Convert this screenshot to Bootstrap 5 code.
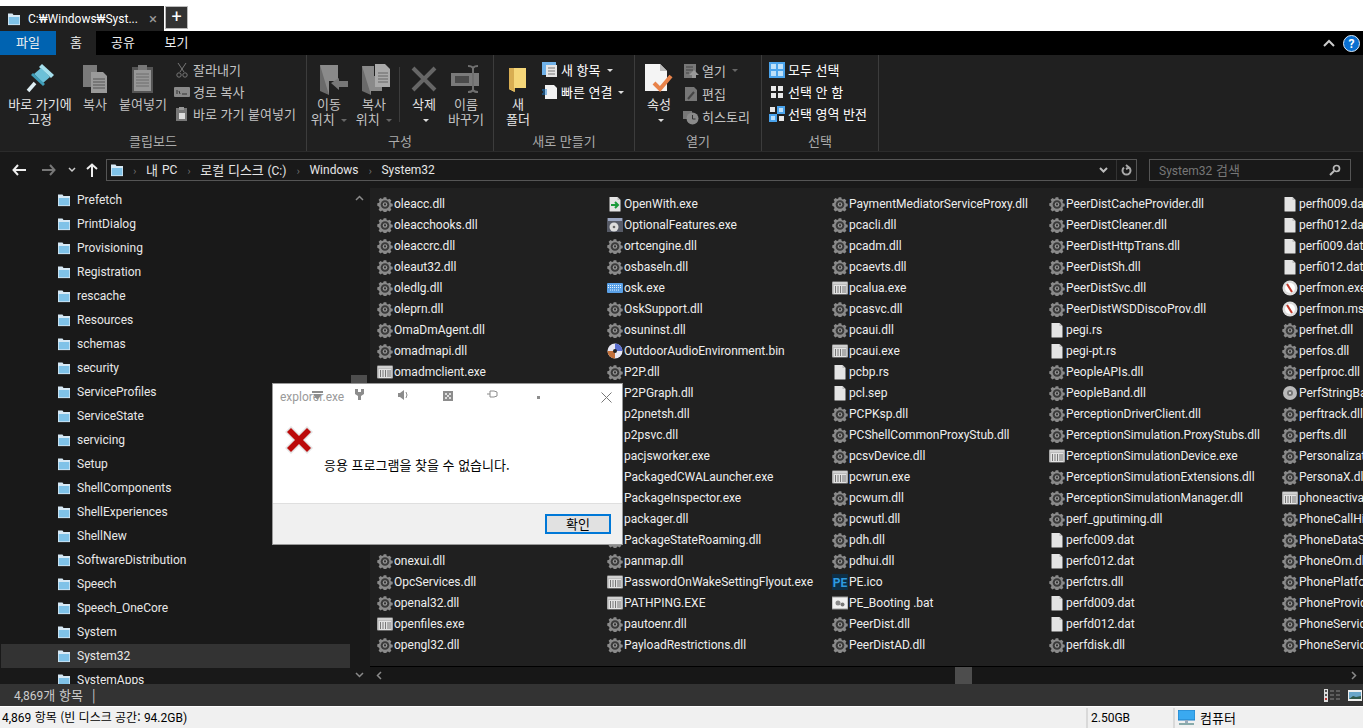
<!DOCTYPE html>
<html lang="ko">
<head>
    <meta charset="UTF-8">
    <meta name="viewport" content="width=device-width, initial-scale=1.0">
    <link href="https://cdn.jsdelivr.net/npm/bootstrap@5.3.3/dist/css/bootstrap.min.css" rel="stylesheet">
    <title>C:\Windows\System32</title>
    <style>
        html, body { height: 100%; }
        body { width: 1363px; height: 728px; overflow: hidden; background: #fff; color: #fff; font: 12px/16px Roboto, "Noto Sans CJK KR", sans-serif; position: relative; }
        .ko { font-family: "Noto Sans CJK KR", Roboto, sans-serif; font-size: 13px; }
        .lat { font-family: Roboto, sans-serif; font-size: 12px; }

        /* title bar */
        .title-strip { height: 31px; padding-top: 6px; background: #fff; }
        .win-tab { width: 164px; height: 25px; background: #202020; padding: 0 7px; gap: 7px; white-space: nowrap; }
        .win-tab .tab-x { color: #999; font-size: 15px; margin-left: auto; }
        .win-plus { width: 23px; height: 23px; margin-left: 1px; background: #333; border: 1px solid #bbb; font-size: 18px; line-height: 19px; text-align: center; }

        /* ribbon */
        .rb-tabs { height: 24px; background: #000; }
        .rb-tab { height: 24px; line-height: 22px; text-align: center; color: #eee; }
        .rb-tab.file-tab { width: 56px; background: #0063b1; }
        .rb-tab.on { width: 40px; background: #202020; height: 25px; position: relative; z-index: 1; }
        .rb-tab.t2 { width: 54px; } .rb-tab.t3 { width: 53px; }
        .rb-right { margin-left: auto; padding-right: 3px; gap: 8px; }
        .rb-body { height: 97px; background: #202020; border-bottom: 1px solid #2b2b2b; }
        .rb-group { border-right: 1px solid #3c3c3c; position: relative; height: 96px; padding-top: 3px; flex: none; }
        .rb-label { position: absolute; left: 0; right: 0; bottom: 0; height: 20px; line-height: 20px; text-align: center; color: #ababab; }
        .rb-big { flex: none; text-align: center; line-height: 15px; color: #e6e6e6; padding-top: 5px; }
        .rb-big svg { display: block; margin: 0 auto 1px; height: 32px; }
        .rb-dim { color: #c4c4c4; }
        .rb-small { line-height: 22px; white-space: nowrap; padding-top: 1px; }
        .rb-small > div { height: 22px; display: flex; align-items: center; gap: 3px; }
        .rb-small.tall > div { height: 23px; }
        .caret-s { display: inline-block; border: 3px solid transparent; border-top: 3px solid #ddd; border-bottom: 0; vertical-align: middle; margin-left: 3px; }
        .caret-d { border-top-color: #666; }
        .vsep { width: 1px; background: #3c3c3c; height: 55px; margin-top: 9px; }

        /* address bar */
        .addr-row { height: 36px; background: #191919; padding-top: 7px; }
        .nav-ic { width: 26px; height: 22px; display: flex; align-items: center; justify-content: center; }
        .addr-box { width: 1031px; height: 22px; border: 1px solid #555; gap: 9px; padding-left: 3px; color: #e6e6e6; }
        .addr-box .sep { color: #777; font-size: 11px; width: 4px; }
        .addr-box .sep:not(:first-of-type) { margin-left: 1px; }
        .search-box { width: 202px; height: 22px; margin-left: 12px; border: 1px solid #555; color: #777; padding: 0 9px; }

        /* main area */
        .main-area { height: 496px; overflow: hidden; background: #191919; }
        .side-tree { width: 368px; flex: none; background: #191919; position: relative; overflow: hidden; }
        .tree-row { height: 24px; margin: 0 18px 0 1px; padding-left: 56px; gap: 6px; color: #e8e8e8; }
        .tree-row.on { background: #333; }
        .tree-sb { position: absolute; top: 0; bottom: 0; right: 1px; width: 16px; }
        .tree-thumb { position: absolute; top: 187px; left: 0; right: 0; height: 160px; background: #4d4d4d; }
        .sb-arrow { position: absolute; left: 0; right: 0; text-align: center; line-height: 6px; }
        .files-wrap { width: 993px; flex: none; margin-left: 2px; background: #202020; position: relative; overflow: hidden; }
        .files-grid { height: 479px; padding: 5px 0 0 7px; display: grid; grid-auto-flow: column; grid-template-rows: repeat(22, 21px); grid-template-columns: 230px 225px 217px 233px 200px; overflow: hidden; border-bottom: 1px solid #000; }
        .file-item { display: flex; align-items: center; gap: 1px; white-space: nowrap; color: #eee; }
        .file-item svg { flex: none; }
        .hscroll { height: 17px; background: #171717; position: relative; }
        .hscroll-thumb { position: absolute; left: 585px; top: 0; width: 17px; height: 17px; background: #4d4d4d; }

        /* status bars */
        .status-dark { height: 22px; background: #333; color: #ccc; padding-left: 14px; gap: 9px; }
        .status-icons { margin-left: auto; gap: 7px; padding-right: 1px; }
        .status-white { height: 22px; background: #f0f0f0; color: #000; border-top: 1px solid #fff; }
        .status-count { font-size: 12px; padding-left: 2px; }
        .st-cell { border-left: 2px solid #d9d9d9; padding-left: 3px; height: 20px; gap: 5px; flex: none; }

        /* message box */
        .err-box { position: absolute; left: 272px; top: 383px; width: 351px; height: 162px; background: #fff; border: 1px solid #999; color: #000; z-index: 5; }
        .err-title { height: 28px; padding-left: 7px; padding-top: 5px; color: #9a9a9a; font-size: 12px; position: relative; }
        .err-ghost { position: absolute; top: 1px; left: 0; right: 0; height: 20px; color: #8c8c8c; }
        .err-ghost svg { position: absolute; }
        .err-body { height: 91px; position: relative; }
        .err-msg { position: absolute; left: 51px; top: 45px; }
        .err-ic { position: absolute; left: 11px; top: 13px; }
        .err-foot { height: 41px; background: #f0f0f0; border-top: 1px solid #dfdfdf; padding: 10px 11px 0 0; text-align: right; }
        .err-ok { width: 66px; height: 20px; padding: 0; border-radius: 0; border: 2px solid #0078d7; background: #e1e1e1; line-height: 14px; color: #000; }
    </style>
</head>
<body>
    <svg width="0" height="0" class="position-absolute">
        <defs>
            <symbol id="i-gear" viewBox="-0.500 -0.500 17 17">
                <path fill="#8a8a8a" d="M6.600.800h2.800l.4 1.900 1.300.6 1.700-1 2 2-1 1.600.5 1.400 1.900.4v2.800l-1.900.4-.5 1.400 1 1.700-2 1.900-1.700-1-1.300.6-.4 1.900H6.600l-.4-1.900-1.300-.6-1.700 1-2-1.900 1-1.700-.5-1.400L-.2 9.900V7.100l1.900-.4.500-1.400-1-1.700 2-1.900 1.700 1 1.300-.6z"/>
                <circle cx="8" cy="8.500" r="4.600" fill="#3a3a3a"/><circle cx="8" cy="8.500" r="2.400" fill="#9a9a9a"/><circle cx="8" cy="8.500" r="1.200" fill="#333"/>
            </symbol>
            <symbol id="i-page" viewBox="0 0 16 16">
                <path fill="#e4e4e4" d="M2.500 1h8l3 3v11q0 .5-.5.5H3q-.5 0-.5-.5z"/><path fill="#bbb" d="M10.500 1v3h3z"/>
            </symbol>
            <symbol id="i-exe" viewBox="0 0 16 16">
                <rect x="0" y="1.500" width="16" height="13" rx="1" fill="#a8a8a8"/><rect x="1" y="2" width="14" height="2.500" fill="#d0d0d0"/>
                <rect x="1.500" y="5" width="13" height="9" fill="#e2e2e2"/>
                <path stroke="#777" d="M3.500 6v7M6 6v7M8.500 6v7M11 6v7M13 6v7"/>
            </symbol>
            <symbol id="i-folder" viewBox="0 0 14 14">
                <path fill="#d7e9f5" d="M1 1.500h4.500l1 1.500H13v10H1z"/><path fill="#7fc2e8" d="M1.800 5h10.500v7.300H1.800z"/><path fill="#444" d="M1 13h12v.6H1z"/>
            </symbol>
            <symbol id="i-folder-y" viewBox="0 0 20 28">
                <path fill="#c89a3f" d="M1 3l6 1v23l-6-3z"/><path fill="#f5d679" d="M1 3h17v20H6.500v4L1 24z"/><path fill="#d8ad52" d="M1 3h5v23l-5-2z"/>
            </symbol>
            <symbol id="i-docs" viewBox="0 0 26 30">
                <path fill="#7a7a7a" d="M1 1h14v22H1z"/><path fill="#9a9a9a" d="M9 8h12l4 4v17H9z"/><path stroke="#555" d="M11 15h12M11 18h12M11 21h12M11 24h12"/>
            </symbol>
            <symbol id="i-clip" viewBox="0 0 24 30">
                <rect x="1" y="3" width="21" height="26" fill="#555"/><rect x="3" y="6" width="17" height="21" fill="#979797"/><rect x="7" y="1" width="9" height="5" fill="#777"/><path stroke="#6c6c6c" d="M5 10h13M5 13h13M5 16h13M5 19h13M5 22h13"/>
            </symbol>
            <symbol id="i-move" viewBox="0 0 30 32">
                <path fill="#6a6a6a" d="M1 2l9 4v26l-9-4z"/><path fill="#8a8a8a" d="M1 2h18v16H10v14z"/><path fill="#777" d="M12 20l8-5v3h9v6h-9v3z"/>
            </symbol>
            <symbol id="i-copyto" viewBox="0 0 30 32">
                <path fill="#6a6a6a" d="M1 3l9 4v25l-9-4z"/><path fill="#8a8a8a" d="M1 3h12v10h8v15H10v4z"/><path fill="#aaa" d="M14 1h10l5 5v18H14z"/><path stroke="#666" d="M17 10h10M17 13h10M17 16h10M17 19h10"/>
            </symbol>
            <symbol id="i-rename" viewBox="0 0 30 30">
                <rect x="0" y="9" width="28" height="13" fill="#7a7a7a"/><rect x="4" y="12" width="14" height="7" fill="#4a4a4a"/>
                <path fill="none" stroke="#6f6f6f" stroke-width="2" d="M17 2q4 0 5 2 1-2 5-2M22 4v22M17 28q4 0 5-2 1 2 5 2"/>
            </symbol>
            <symbol id="i-props" viewBox="0 0 30 32">
                <path fill="#f4f4f4" d="M1 1h15l7 7v20H1z"/><path fill="#bbb" d="M16 1v7h7z"/>
                <path fill="none" stroke="#e8834a" stroke-width="4" d="M10 20l6 6 11-13"/>
            </symbol>
        </defs>
    </svg>

    <div class="title-strip d-flex align-items-start">
        <div class="win-tab d-flex align-items-center">
            <svg width="14" height="14"><use href="#i-folder"/></svg>
            <span>C:₩Windows₩Syst...</span>
            <span class="tab-x">&times;</span>
        </div>
        <div class="win-plus">+</div>
    </div>

    <div class="rb-tabs d-flex ko">
        <div class="rb-tab file-tab">파일</div>
        <div class="rb-tab on">홈</div>
        <div class="rb-tab t2">공유</div>
        <div class="rb-tab t3">보기</div>
        <div class="rb-right d-flex align-items-center">
            <svg width="12" height="8" viewBox="0 0 12 8"><path fill="none" stroke="#ccc" stroke-width="2" d="M1 7l5-5 5 5"/></svg>
            <svg width="17" height="17" viewBox="0 0 17 17"><circle cx="8.500" cy="8.500" r="8" fill="#0a6fd0" stroke="#dbe9f7"/><text x="8.500" y="13" text-anchor="middle" font-size="12" font-weight="700" fill="#fff" font-family="Roboto, sans-serif">?</text></svg>
        </div>
    </div>

    <div class="rb-body d-flex ko">
        <!-- 클립보드 -->
        <div class="rb-group d-flex" style="width:307px">
            <div class="rb-big" style="width:80px">
                <svg width="30" height="32" viewBox="0 0 30 32"><path fill="#a6e0ee" d="M17 1l12 11-3 3-12-11z"/><path fill="#6cc0d8" d="M16 5l9 9-7 6-9-9z"/><path fill="#3f9db8" d="M8 10l12 11-2 2-12-11z"/><path stroke="#dfeef3" stroke-width="3.500" d="M10 20l-7 8"/></svg>
                바로 가기에<br>고정
            </div>
            <div class="rb-big rb-dim" style="width:30px">
                <svg width="26" height="30"><use href="#i-docs"/></svg>복사
            </div>
            <div class="rb-big rb-dim" style="width:66px">
                <svg width="24" height="30"><use href="#i-clip"/></svg>붙여넣기
            </div>
            <div class="rb-small rb-dim" style="margin-left:-2px">
                <div><svg width="16" height="16" viewBox="0 0 16 16"><path fill="none" stroke="#777" d="M4 1l6 9M12 1l-6 9"/><circle cx="5" cy="13" r="2.200" fill="none" stroke="#777"/><circle cx="11" cy="13" r="2.200" fill="none" stroke="#777"/></svg>잘라내기</div>
                <div><svg width="16" height="16" viewBox="0 0 16 16"><rect y="3" width="16" height="10" rx="1" fill="#8a8a8a"/><path stroke="#333" d="M3 6v4M5 7l1 3M8 10h5"/></svg>경로 복사</div>
                <div><svg width="16" height="16" viewBox="0 0 16 16"><rect x="2" y="2" width="11" height="13" fill="#777"/><rect x="5" y="1" width="5" height="3" fill="#999"/><rect x="5" y="7" width="6" height="6" fill="#ddd"/></svg>바로 가기 붙여넣기</div>
            </div>
            <div class="rb-label">클립보드</div>
        </div>
        <!-- 구성 -->
        <div class="rb-group d-flex" style="width:187px">
            <div class="rb-big rb-dim" style="width:44px">
                <svg width="30" height="32" style="transform:translateX(5px)"><use href="#i-move"/></svg>이동<br>위치 <span class="caret-s caret-d"></span>
            </div>
            <div class="rb-big rb-dim" style="width:46px">
                <svg width="30" height="32" style="transform:translateX(2px)"><use href="#i-copyto"/></svg>복사<br>위치 <span class="caret-s caret-d"></span>
            </div>
            <div class="vsep" style="margin-left:2px"></div>
            <div class="rb-big" style="width:48px">
                <svg width="26" height="32" viewBox="0 0 26 26"><path stroke="#666" stroke-width="4" d="M2 2l22 22M24 2L2 24"/></svg>삭제<br><span class="caret-s"></span>
            </div>
            <div class="rb-big rb-dim" style="width:36px">
                <svg width="30" height="32"><use href="#i-rename"/></svg>이름<br>바꾸기
            </div>
            <div class="rb-label">구성</div>
        </div>
        <!-- 새로 만들기 -->
        <div class="rb-group d-flex" style="width:141px">
            <div class="rb-big" style="width:48px">
                <svg width="20" height="32"><use href="#i-folder-y"/></svg>새<br>폴더
            </div>
            <div class="rb-small">
                <div><svg width="16" height="16" viewBox="0 0 16 16"><rect width="14" height="13" fill="#6fb1e8"/><rect x="4" y="3" width="11" height="12" fill="#e6e6e6"/><path stroke="#777" d="M6 6h7M6 9h7M6 12h7"/></svg>새 항목<span class="caret-s"></span></div>
                <div><svg width="16" height="16" viewBox="0 0 16 16"><path fill="#f2f2f2" d="M3 1h9l3 3v11H3z"/><path stroke="#1f7fd0" d="M0 6h5M1 8h4M0 10h5"/></svg>빠른 연결<span class="caret-s"></span></div>
            </div>
            <div class="rb-label">새로 만들기</div>
        </div>
        <!-- 열기 -->
        <div class="rb-group d-flex" style="width:127px">
            <div class="rb-big" style="width:48px">
                <svg width="30" height="32"><use href="#i-props"/></svg>속성<br><span class="caret-s"></span>
            </div>
            <div class="rb-small tall rb-dim">
                <div><svg width="16" height="16" viewBox="0 0 16 16"><rect x="1" y="1" width="12" height="14" fill="#777"/><path stroke="#444" d="M3 4h7M3 7h7M3 10h3"/><path fill="#999" d="M11 7l5 5h-3v3h-4v-3H6z"/></svg>열기 <span class="caret-s caret-d"></span></div>
                <div><svg width="16" height="16" viewBox="0 0 16 16"><path fill="#777" d="M2 1h9l3 3v11H2z"/><path stroke="#444" stroke-width="2" d="M5 13l6-7"/></svg>편집</div>
                <div><svg width="16" height="16" viewBox="0 0 16 16"><path fill="#777" d="M0 2h9v8H0z"/><circle cx="9.500" cy="9.500" r="6" fill="#8a8a8a"/><path stroke="#333" fill="none" d="M9.500 6v4h3"/></svg>히스토리</div>
            </div>
            <div class="rb-label">열기</div>
        </div>
        <!-- 선택 -->
        <div class="rb-group d-flex" style="width:117px;padding-left:7px">
            <div class="rb-small">
                <div><svg width="16" height="16" viewBox="0 0 16 16"><rect width="16" height="16" fill="#4aa3ec"/><path fill="#bde0fa" d="M2 2h5v5H2zM9 2h5v5H9zM2 9h5v5H2zM9 9h5v5H9z"/></svg>모두 선택</div>
                <div><svg width="16" height="16" viewBox="0 0 16 16"><path fill="#e8e8e8" d="M2 2h5v5H2zM9 2h5v5H9zM2 9h5v5H2zM9 9h5v5H9z"/></svg>선택 안 함</div>
                <div><svg width="16" height="16" viewBox="0 0 16 16"><path fill="#4aa3ec" d="M8 0h8v8H8zM0 8h8v8H0z"/><path fill="#e8e8e8" d="M1 1h5v5H1zM10 10h5v5h-5z"/><path fill="#bde0fa" d="M10 2h4v4h-4zM2 10h4v4H2z"/></svg>선택 영역 반전</div>
            </div>
            <div class="rb-label">선택</div>
        </div>
    </div>

    <div class="addr-row d-flex">
        <div class="d-flex" style="margin:0 3px 0 6px">
            <div class="nav-ic"><svg width="14" height="12" viewBox="0 0 14 12"><path fill="none" stroke="#eee" stroke-width="2" d="M6 1L1.500 6 6 11M2 6h12"/></svg></div>
            <div class="nav-ic" style="margin-left:4px"><svg width="14" height="12" viewBox="0 0 14 12"><path fill="none" stroke="#777" stroke-width="2" d="M8 1l4.500 5L8 11M12 6H0"/></svg></div>
            <div class="nav-ic" style="width:19px"><svg width="8" height="6" viewBox="0 0 8 6"><path fill="none" stroke="#ccc" stroke-width="1.500" d="M1 1l3 3 3-3"/></svg></div>
            <div class="nav-ic" style="width:22px"><svg width="12" height="14" viewBox="0 0 12 14"><path fill="none" stroke="#eee" stroke-width="2" d="M1 6l5-4.500L11 6M6 2v12"/></svg></div>
        </div>
        <div class="addr-box d-flex align-items-center ko">
            <svg width="14" height="14"><use href="#i-folder"/></svg>
            <span class="sep">›</span><span class="d-flex gap-1 align-items-center">내 <span class="lat">PC</span></span>
            <span class="sep">›</span><span>로컬 디스크 <span class="lat">(C:)</span></span>
            <span class="sep">›</span><span class="lat">Windows</span>
            <span class="sep">›</span><span class="lat">System32</span>
            <span class="ms-auto d-flex align-items-center h-100">
                <svg width="9" height="6" viewBox="0 0 9 6" class="me-2"><path fill="none" stroke="#bbb" stroke-width="2" d="M1 1l3.500 3.500L8 1"/></svg>
                <span class="d-flex align-items-center justify-content-center h-100" style="width:20px;border-left:1px solid #333">
                    <svg width="11" height="13" viewBox="0 0 11 13"><path fill="none" stroke="#aaa" stroke-width="2" d="M3 3.500a4 4 0 1 0 5 0M5 1l3 2.500L5 5"/></svg>
                </span>
            </span>
        </div>
        <div class="search-box d-flex align-items-center ko">
            <span><span class="lat">System32</span> 검색</span>
            <svg class="ms-auto" width="12" height="12" viewBox="0 0 12 12"><circle cx="7.500" cy="4.500" r="3" fill="none" stroke="#bbb" stroke-width="1.700"/><path stroke="#bbb" stroke-width="2" d="M5 7l-4 4"/></svg>
        </div>
    </div>

    <div class="main-area d-flex">
        <div class="side-tree">
            <div id="treeRows"></div>
            <div class="tree-sb">
                <div class="sb-arrow" style="top:6px"><svg width="9" height="6" viewBox="0 0 9 6"><path fill="none" stroke="#8a8a8a" stroke-width="1.500" d="M1 5l3.500-3.500L8 5"/></svg></div>
                <div class="tree-thumb"></div>
                <div class="sb-arrow" style="bottom:6px"><svg width="9" height="6" viewBox="0 0 9 6"><path fill="none" stroke="#8a8a8a" stroke-width="1.500" d="M1 1l3.500 3.500L8 1"/></svg></div>
            </div>
        </div>
        <div class="files-wrap">
            <div class="files-grid" id="fileGrid"></div>
            <div class="hscroll">
                <svg class="position-absolute" style="left:6px;top:4px" width="6" height="9" viewBox="0 0 6 9"><path fill="none" stroke="#8a8a8a" stroke-width="1.500" d="M5 1L1.500 4.500 5 8"/></svg>
                <div class="hscroll-thumb"></div>
                <svg class="position-absolute" style="right:6px;top:4px" width="6" height="9" viewBox="0 0 6 9"><path fill="none" stroke="#8a8a8a" stroke-width="1.500" d="M1 1l3.500 3.500L1 8"/></svg>
            </div>
        </div>
    </div>

    <div class="status-dark d-flex align-items-center ko">
        <span><span class="lat">4,869</span>개 항목</span><span>|</span>
        <div class="status-icons d-flex align-items-center">
            <svg width="17" height="13" viewBox="0 0 17 13"><rect width="4" height="13" fill="#ddd"/><path fill="#555" d="M1 1h2v2H1zM1 5h2v2H1z"/><path fill="#b33" d="M1 9h2v2H1z"/><path stroke="#888" d="M6 2h4M12 2h4M6 6h4M12 6h4M6 10h4M12 10h4"/></svg>
            <svg width="14" height="11" viewBox="0 0 14 11"><rect width="14" height="11" fill="#eee"/><rect x="1" y="2" width="12" height="7" fill="#6aa6c9"/><path fill="#31594a" d="M1 9l4-3 3 1 5-1v3z"/></svg>
        </div>
    </div>
    <div class="status-white d-flex align-items-center ko">
        <span class="flex-grow-1 status-count"><span class="lat">4,869</span> 항목 (빈 디스크 공간: <span class="lat">94.2GB)</span></span>
        <div class="st-cell d-flex align-items-center" style="width:87px"><span class="lat">2.50GB</span></div>
        <div class="st-cell d-flex align-items-center" style="width:190px">
            <svg width="17" height="15" viewBox="0 0 17 15"><rect width="17" height="10" fill="#3aa9f0" stroke="#1e7fc4"/><path fill="#8aa" d="M1 13h15v2H1z"/><path fill="#9ab" d="M7 10h3v3H7z"/></svg>
            <span>컴퓨터</span>
        </div>
    </div>

    <!-- 오류 대화 상자 -->
    <div class="err-box">
        <div class="err-title">
            explorer.exe
            <div class="err-ghost">
                <svg style="left:39px;top:6px" width="11" height="10" viewBox="0 0 11 10"><path fill="currentColor" d="M0 0h11v2H0zM1 3h9L5.500 9z"/></svg>
                <svg style="left:82px;top:4px" width="9" height="11" viewBox="0 0 9 11"><path fill="currentColor" d="M0 0h3v3h3V0h3v5L6 7v4H3V7L0 5z"/></svg>
                <svg style="left:125px;top:4px" width="11" height="12" viewBox="0 0 11 12"><path fill="currentColor" d="M0 4h2l4-3v10L2 8H0z"/><path fill="none" stroke="currentColor" d="M8 3q2 3 0 6"/></svg>
                <svg style="left:170px;top:6px" width="10" height="10" viewBox="0 0 10 10"><rect width="10" height="10" fill="currentColor"/><path fill="#ddd" d="M2 2h2v2H2zM6 2h2v2H6zM4 4h2v2H4zM2 6h2v2H2zM6 6h2v2H6z"/></svg>
                <svg style="left:214px;top:5px" width="11" height="9" viewBox="0 0 11 9"><path fill="none" stroke="currentColor" d="M0 4h3M3 1h4l3 1v4l-3 1H3z"/></svg>
                <svg style="left:264px;top:11px" width="3" height="3"><rect width="3" height="3" fill="currentColor"/></svg>
            </div>
            <svg class="position-absolute" style="right:10px;top:8px" width="11" height="11" viewBox="0 0 11 11"><path stroke="#777" d="M.5.500l10 10M10.500.500l-10 10"/></svg>
        </div>
        <div class="err-body">
            <svg class="err-ic" width="30" height="30" viewBox="0 0 30 30"><path fill="#e3e3e3" d="M7 1l8 8 8-8 6 6-8 8 8 8-6 6-8-8-8 8-6-6 8-8-8-8z"/><path fill="#bb0a0a" d="M7 3l8 8 8-8 4 4-8 8 8 8-4 4-8-8-8 8-4-4 8-8-8-8z"/></svg>
            <div class="err-msg ko">응용 프로그램을 찾을 수 없습니다.</div>
        </div>
        <div class="err-foot"><button type="button" class="btn err-ok ko">확인</button></div>
    </div>

    <script src="https://cdn.jsdelivr.net/npm/bootstrap@5.3.3/dist/js/bootstrap.bundle.min.js"></script>
    <script>
        // left tree folders
        const folders = ['Prefetch','PrintDialog','Provisioning','Registration','rescache','Resources','schemas','security','ServiceProfiles','ServiceState','servicing','Setup','ShellComponents','ShellExperiences','ShellNew','SoftwareDistribution','Speech','Speech_OneCore','System','System32','SystemApps'];
        document.getElementById('treeRows').innerHTML = folders.map(name =>
            `<div class="tree-row d-flex align-items-center${name === 'System32' ? ' on' : ''}"><svg width="14" height="14"><use href="#i-folder"/></svg><span>${name}</span></div>`
        ).join('');

        // file columns, rows behind the dialog are left empty
        const columns = [
            ['oleacc.dll','oleacchooks.dll','oleaccrc.dll','oleaut32.dll','oledlg.dll','oleprn.dll','OmaDmAgent.dll','omadmapi.dll','omadmclient.exe','','','','','','','','','onexui.dll','OpcServices.dll','openal32.dll','openfiles.exe','opengl32.dll'],
            ['OpenWith.exe','OptionalFeatures.exe','ortcengine.dll','osbaseln.dll','osk.exe','OskSupport.dll','osuninst.dll','OutdoorAudioEnvironment.bin','P2P.dll','P2PGraph.dll','p2pnetsh.dll','p2psvc.dll','pacjsworker.exe','PackagedCWALauncher.exe','PackageInspector.exe','packager.dll','PackageStateRoaming.dll','panmap.dll','PasswordOnWakeSettingFlyout.exe','PATHPING.EXE','pautoenr.dll','PayloadRestrictions.dll'],
            ['PaymentMediatorServiceProxy.dll','pcacli.dll','pcadm.dll','pcaevts.dll','pcalua.exe','pcasvc.dll','pcaui.dll','pcaui.exe','pcbp.rs','pcl.sep','PCPKsp.dll','PCShellCommonProxyStub.dll','pcsvDevice.dll','pcwrun.exe','pcwum.dll','pcwutl.dll','pdh.dll','pdhui.dll','PE.ico','PE_Booting .bat','PeerDist.dll','PeerDistAD.dll'],
            ['PeerDistCacheProvider.dll','PeerDistCleaner.dll','PeerDistHttpTrans.dll','PeerDistSh.dll','PeerDistSvc.dll','PeerDistWSDDiscoProv.dll','pegi.rs','pegi-pt.rs','PeopleAPIs.dll','PeopleBand.dll','PerceptionDriverClient.dll','PerceptionSimulation.ProxyStubs.dll','PerceptionSimulationDevice.exe','PerceptionSimulationExtensions.dll','PerceptionSimulationManager.dll','perf_gputiming.dll','perfc009.dat','perfc012.dat','perfctrs.dll','perfd009.dat','perfd012.dat','perfdisk.dll'],
            ['perfh009.dat','perfh012.dat','perfi009.dat','perfi012.dat','perfmon.exe','perfmon.msc','perfnet.dll','perfos.dll','perfproc.dll','PerfStringBackup.INI','perftrack.dll','perfts.dll','Personalization.dll','PersonaX.dll','phoneactivate.exe','PhoneCallHistory.dll','PhoneDataSync.dll','PhoneOm.dll','PhonePlatform.dll','PhoneProviders.dll','PhoneService.dll','PhoneServiceRes.dll']
        ];

        // picks the icon for a file name
        function iconFor(name) {
            if (name === 'PE.ico') return '<svg width="16" height="16" viewBox="0 0 16 16"><rect width="16" height="16" fill="#0d2f47"/><text x="8" y="13" text-anchor="middle" font-size="12" font-weight="700" fill="#2e9be0" font-family="Roboto, sans-serif">PE</text></svg>';
            if (name === 'osk.exe') return '<svg width="16" height="16" viewBox="0 0 16 16"><rect y="3" width="16" height="10" rx="1" fill="#5aa0e6"/><path stroke="#e6f1fb" stroke-dasharray="1 1" d="M1 5.500h14M1 7.500h14M3 10h10"/></svg>';
            if (name === 'OpenWith.exe') return '<svg width="16" height="16" viewBox="0 0 16 16"><use href="#i-page"/><path fill="none" stroke="#1a9a3a" stroke-width="2" d="M4 9h6M8 6l3 3-3 3"/></svg>';
            if (name === 'OptionalFeatures.exe') return '<svg width="16" height="16" viewBox="0 0 16 16"><rect y="1" width="16" height="14" fill="#565a66"/><rect x="1" y="1" width="14" height="3" fill="#9aa5c0"/><circle cx="7" cy="10" r="4.500" fill="#ddd"/><circle cx="7" cy="10" r="1.300" fill="#666"/></svg>';
            if (name === 'OutdoorAudioEnvironment.bin') return '<svg width="16" height="16" viewBox="0 0 16 16"><circle cx="8" cy="8" r="7.500" fill="#e8e8f4"/><path fill="#5b6fd0" d="M8 .500A7.500 7.500 0 0 1 15.500 8H8z"/><path fill="#c2703a" d="M8 8v7.500A7.500 7.500 0 0 1 .500 8z"/><circle cx="8" cy="8" r="2" fill="#222"/></svg>';
            if (name.startsWith('perfmon')) return '<svg width="16" height="16" viewBox="0 0 16 16"><circle cx="8" cy="8" r="7.500" fill="#ddd"/><circle cx="8" cy="8" r="5" fill="#fff"/><path stroke="#c0392b" stroke-width="2" d="M5 4l5 8"/></svg>';
            if (name === 'PerfStringBackup.INI') return '<svg width="16" height="16" viewBox="0 0 16 16"><circle cx="8" cy="8" r="7" fill="#bbb"/><circle cx="8" cy="8" r="3" fill="#777"/><circle cx="8" cy="8" r="1" fill="#eee"/></svg>';
            if (name === 'PE_Booting .bat') return '<svg width="16" height="16" viewBox="0 0 16 16"><rect y="2" width="16" height="12" fill="#f0f0f0" stroke="#999"/><circle cx="6" cy="8" r="2.500" fill="#8a8a8a"/><circle cx="10.500" cy="9.500" r="2" fill="#777"/></svg>';
            if (/\.exe$/i.test(name)) return '<svg width="16" height="16"><use href="#i-exe"/></svg>';
            if (/\.dll$/.test(name)) return '<svg width="16" height="16"><use href="#i-gear"/></svg>';
            return '<svg width="16" height="16"><use href="#i-page"/></svg>';
        }

        const grid = document.getElementById('fileGrid');
        columns.forEach(col => {
            col.forEach(name => {
                const item = document.createElement('div');
                item.className = 'file-item';
                item.innerHTML = name ? `${iconFor(name)}<span>${name}</span>` : '';
                grid.appendChild(item);
            });
        });
    </script>
</body>
</html>
